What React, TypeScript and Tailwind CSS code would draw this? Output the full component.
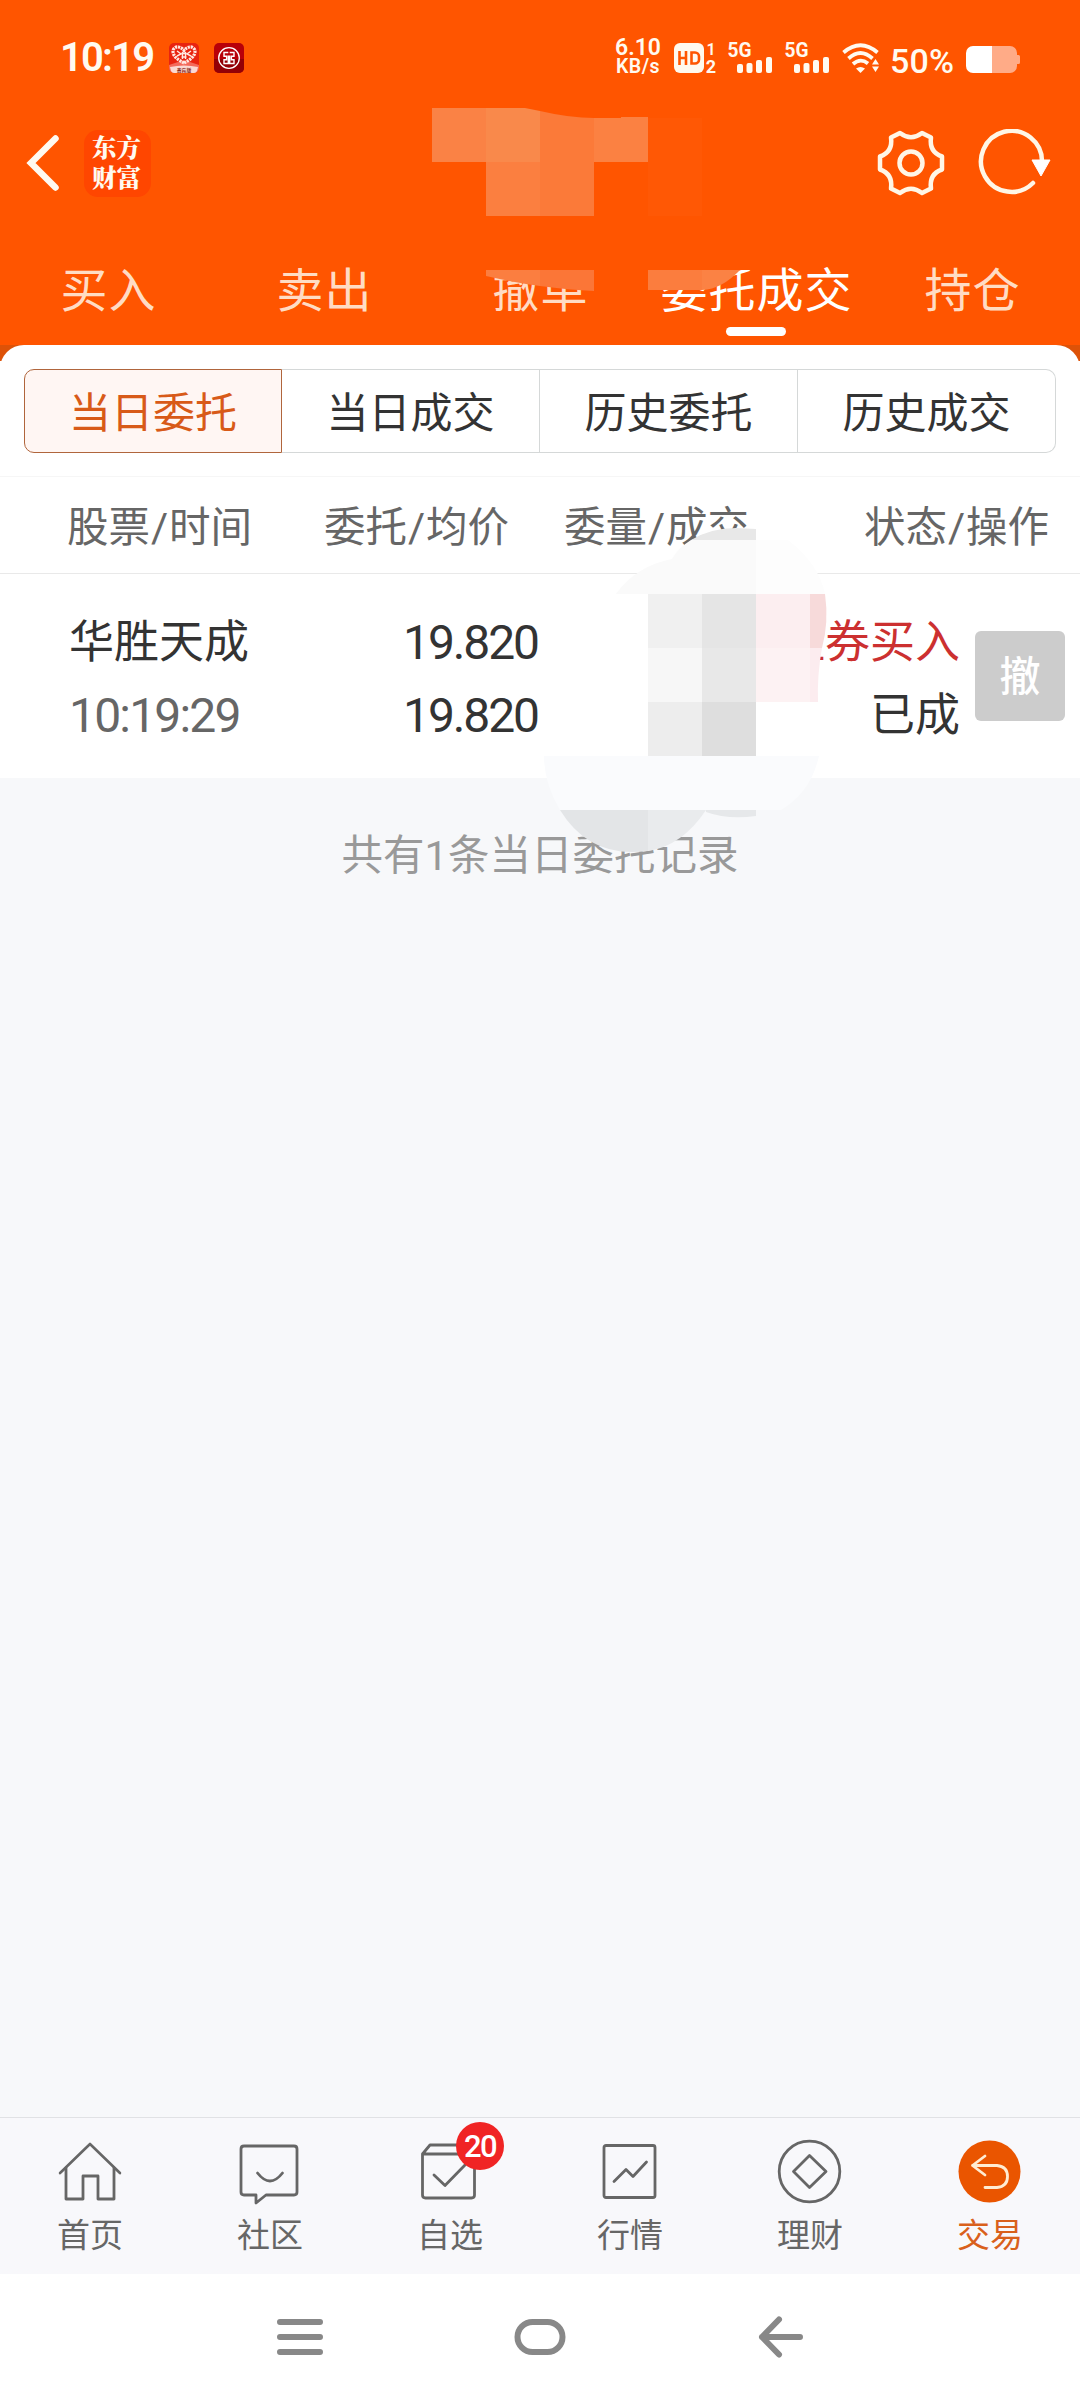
import type { ReactNode } from 'react';

const tabs = ['买入', '卖出', '撤单', '委托成交', '持仓'];

const segments = ['当日委托', '当日成交', '历史委托', '历史成交'];

export default function App() {
  return (
    <div className="relative flex h-[2400px] w-[1080px] flex-col overflow-hidden bg-[#f7f8fa] font-['Roboto','Noto_Sans_CJK_SC',sans-serif] text-[#333]">
      <header className="flex h-[345px] shrink-0 flex-col bg-[#ff5500] text-[#fffaf0]">
        <StatusBar />
        <TitleBar />
        <TopTabs />
      </header>

      <Orders />

      <p className="mt-[54px] flex-1 text-center text-[41.500px] leading-[48px] text-[#999]">共有1条当日委托记录</p>

      <BottomBar />
      <SystemNav />
      <Mosaic />
    </div>
  );
}

function StatusBar() {
  return (
    <div className="flex h-[115px] items-center">
      <span className="ml-[60px] w-[94px] text-[40px] font-semibold leading-none tracking-[-1.8px]">10:19</span>

      {/* Notification icons */}
      <svg className="ml-[15px] h-[30px] w-[30px]" viewBox="0 0 30 30">
        <rect width="30" height="30" rx="5" fill="#e9230f" />
        <path d="M0 22 15 17l15 5v3a5 5 0 0 1-5 5H5a5 5 0 0 1-5-5z" fill="#f4695a" />
        <path
          d="M15 20C9 17 4 13 4 8.500a4.500 4.500 0 0 1 5.500-4.500c2 .2 4 1.500 5.500 3.500 1.500-2 3.500-3.300 5.500-3.500A4.500 4.500 0 0 1 26 8.500C26 13 21 17 15 20z"
          fill="none"
          stroke="#ffe9e2"
          strokeWidth="3.200"
          strokeDasharray="2.200 .8"
        />
        <path d="M8 8l4 3-4 2M22 8l-4 3 4 2M12.500 10.500h5M12.500 14h5M13.500 9v7M16.500 9v7" fill="none" stroke="#ffe9e2" strokeWidth="1.400" />
        <path d="M1 24q14-3 28 0l-1 4a4 4 0 0 1-3 2H5a4 4 0 0 1-3-2z" fill="#fbd9d3" />
        <text x="15" y="28.500" textAnchor="middle" fontSize="4.800" fontWeight="700" fill="#8c2a20">
          贵宾版
        </text>
      </svg>
      <svg className="ml-[15px] h-[30px] w-[30px]" viewBox="0 0 30 30">
        <rect width="30" height="30" rx="5" fill="#b80009" />
        <path d="M0 16h30v9a5 5 0 0 1-5 5H5a5 5 0 0 1-5-5z" fill="#940006" />
        <circle cx="15" cy="15" r="10.300" fill="none" stroke="#fff" strokeWidth="1.300" />
        <path
          d="M14.300 9.500H10v3.700h2.600v3.600H10v3.700h4.300v-8M15.700 9.500H20v3.700h-2.600v3.600H20v3.700h-4.300v-8"
          fill="none"
          stroke="#fff"
          strokeWidth="1.400"
        />
      </svg>

      <div className="ml-[371px] flex w-[46px] flex-col text-center font-semibold">
        <span className="text-[23px] leading-[19px]">6.10</span>
        <span className="text-[19.500px] leading-[20px] tracking-[.4px]">KB/s</span>
      </div>

      <svg className="ml-[13px] h-[30px] w-[43px] overflow-visible" viewBox="0 0 43 30">
        <rect width="30" height="30" rx="6" fill="#fff9ee" />
        <path
          d="M5.500 8v14M12 8v14M5.500 15H12M17.500 9.500h3.500a4 4 0 0 1 4 4v3a4 4 0 0 1-4 4h-3.500z"
          fill="none"
          stroke="#ff5500"
          strokeWidth="2.600"
        />
        <text x="37" y="12" textAnchor="middle" fontSize="16" fontWeight="600" fill="#fff9ee">
          1
        </text>
        <text x="37" y="29.500" textAnchor="middle" fontSize="18" fontWeight="700" fill="#fff9ee">
          2
        </text>
      </svg>

      <Signal className="ml-[11px]" />
      <Signal className="ml-[12px]" />

      <svg className="ml-[12px] h-[30px] w-[38px]" viewBox="0 0 38 30" fill="none" stroke="#fffaf0" strokeWidth="3.800">
        <path d="M1.500 9.500Q18.500-5 35.500 9.500" />
        <path d="M6.500 15.500Q18.500 4.500 30.500 15.500" />
        <path d="M11 21Q18.500 14.500 26 20.500" />
        <path d="M14 25.500q4.500-3 9 0L18.500 30z" fill="#fffaf0" stroke="none" />
        <path d="M30 21.500h7L33.500 16zM30 23.500h7L33.500 29z" fill="#fffaf0" stroke="none" />
      </svg>

      <span className="ml-[10px] mt-[6px] w-[67px] text-[34px] font-medium leading-none tracking-[.2px]">50%</span>

      <svg className="ml-[9px] mt-[4px] h-[27px] w-[55px] shrink-0" viewBox="0 0 55 27">
        <path d="M26 0h18a7 7 0 0 1 7 7v2h1.500a1.500 1.500 0 0 1 1.500 1.500v6a1.500 1.500 0 0 1-1.500 1.500H51v2a7 7 0 0 1-7 7H26z" fill="#ffab87" />
        <path d="M7 0h19v27H7a7 7 0 0 1-7-7V7a7 7 0 0 1 7-7z" fill="#fff" />
      </svg>
    </div>
  );
}

function Signal({ className }: { className: string }) {
  return (
    <svg className={`h-[30px] w-[45px] overflow-visible ${className}`} viewBox="0 0 45 30" fill="#fffaf0">
      <text x="-.5" y="14" fontSize="19.500" fontWeight="700" textLength="24" lengthAdjust="spacingAndGlyphs">
        5G
      </text>
      <rect x="9" y="21" width="6" height="9" rx="2" />
      <rect x="18.500" y="20" width="6" height="10" rx="2" />
      <rect x="28" y="17" width="6" height="13" rx="2" />
      <rect x="38" y="14" width="6" height="16" rx="2" />
    </svg>
  );
}

function TitleBar() {
  return (
    <div className="flex h-[96px] items-center">
      <svg className="ml-[26px] h-[58px] w-[34px]" viewBox="0 0 34 58">
        <path d="M29.500 4.500 5 29 29.500 53.500" fill="none" stroke="#fffaf0" strokeWidth="6.500" strokeLinecap="round" />
      </svg>

      <div className="ml-[24px] flex h-[67px] w-[67px] items-center justify-center rounded-[14px] bg-[#ff4600] pb-[3px] pr-[2px] font-['Noto_Serif_CJK_SC','Noto_Sans_CJK_SC',serif] text-[24.500px] font-black leading-[30px]">
        <span className="w-[49px]">东方财富</span>
      </div>

      <svg className="ml-[724.5px] h-[68px] w-[70px]" viewBox="-35 -34 70 68" fill="none" stroke="#fff6e6" strokeWidth="4.500" strokeLinejoin="round">
        <path d="M-11-30Q0-21.500 11-30L20-25.500Q18-11 31-6.500V6.500Q18 11 20 25.500L11 30Q0 21.500-11 30L-20 25.500Q-18 11-31 6.500V-6.500Q-18-11-20-25.500Z" />
        <circle r="11.500" />
      </svg>

      <svg className="ml-[31px] h-[68px] w-[76px]" viewBox="-34 -34 76 68">
        <path d="M31-1A30.500 30.500 0 1 0 22 20" fill="none" stroke="#fff6e6" strokeWidth="4.500" strokeLinecap="round" />
        <path d="M21-3h18L30 13z" fill="#fff" stroke="#fff" strokeLinejoin="round" />
      </svg>
    </div>
  );
}

function TopTabs() {
  return (
    <nav className="grid h-[134px] grid-cols-5 pt-[53px] text-center text-[47px] leading-[54px] tracking-[1px] text-[#ffdcc4]">
      {tabs.map((tab) => (
        <div key={tab} className={tab === '委托成交' ? 'flex flex-col items-center text-white' : ''}>
          <span className="pl-px">{tab}</span>
          {tab === '委托成交' && <i className="mt-[9px] h-[9px] w-[60px] rounded-full bg-white" />}
        </div>
      ))}
    </nav>
  );
}

function Orders() {
  return (
    <section className="h-[433px] shrink-0 bg-[linear-gradient(#dd5208_16px,#fff_16px)]">
      <div className="h-full rounded-t-[24px] bg-white pt-[24px]">
        {/* Day / history switch */}
        <div className="mx-[24px] grid h-[84px] grid-cols-4 text-[42px]">
          {segments.map((name, i) => (
            <div
              key={name}
              className={`flex items-center justify-center pt-[5px] first:rounded-l-[10px] last:rounded-r-[10px] ${
                i === 0 ? 'border border-[#b0653c] bg-[#fff6f3] text-[#d85a18]' : 'border-y border-r border-[#d5d8d8]'
              }`}
            >
              {name}
            </div>
          ))}
        </div>

        <div className="mt-[23px] flex h-[98px] items-center whitespace-nowrap border-y border-b-[#e9e9e9] border-t-[#f6f6f6] pt-[5px] text-[#666]">
          <ColumnTitle className="ml-[67px]" top="股票" bottom="时间" />
          <ColumnTitle className="ml-[71px]" top="委托" bottom="均价" />
          <ColumnTitle className="ml-[54px]" top="委量" bottom="成交" />
          <ColumnTitle className="ml-[114px]" top="状态" bottom="操作" />
        </div>

        <div className="flex pt-[32px] text-[45px] leading-[73px]">
          <div className="ml-[69px] w-[250px]">
            <p>华胜天成</p>
            <p className="text-[48px] tracking-[-1.8px] text-[#666]">10:19:29</p>
          </div>
          <div className="w-[219px] text-right text-[48px] tracking-[-2.1px]">
            <p>19.820</p>
            <p>19.820</p>
          </div>
          <div className="ml-auto text-right">
            <p className="text-[#cc3030]">证券买入</p>
            <p>已成</p>
          </div>
          <button className="ml-[15px] mr-[15px] mt-[25px] h-[90px] w-[90px] rounded-[6px] bg-[#ccc] text-[41px] font-medium leading-[92px] text-white">
            撤
          </button>
        </div>
      </div>
    </section>
  );
}

function ColumnTitle({ className, top, bottom }: { className: string; top: string; bottom: string }) {
  return (
    <div className={`flex w-[186px] shrink-0 text-[41.500px] leading-[60px] ${className}`}>
      <span>{top}</span>
      <span className="w-[19px] text-center">/</span>
      <span>{bottom}</span>
    </div>
  );
}

function BottomBar() {
  return (
    <nav className="grid h-[157px] shrink-0 grid-cols-6 border-t border-[#e1e2e5] bg-[#f8f8fb] text-[#666]">
      <NavItem label="首页">
        <path d="M3.500 31 35 2l31.500 29" transform="translate(35) scale(.95 1) translate(-35)" />
        <path d="M11 26v31h17V34h15v23h16V26" />
      </NavItem>
      <NavItem label="社区">
        <path d="M8 4h50q3 0 3 3v43q0 3-3 3H30l-10 8v-8H8q-3 0-3-3V7q0-3 3-3z" transform="translate(1)" />
        <path d="M22.500 31q12.500 16 25 0" />
      </NavItem>
      <NavItem label="自选" badge={20}>
        <path d="M7.500 12h52v41q0 3-3 3h-46q-3 0-3-3zL15 3h37l7.500 9" />
        <path d="M19 33l11 10.500L50 23" />
      </NavItem>
      <NavItem label="行情">
        <rect x="9" y="3.500" width="51" height="52" rx="2" />
        <path d="M19 39.500l12-12 7 7L51.500 20" />
      </NavItem>
      <NavItem label="理财">
        <circle cx="34.500" cy="29.500" r="30.300" />
        <path d="M34.500 13.500 51 29.500 34.500 45.500 18.500 29.500z" />
      </NavItem>
      <NavItem label="交易" active>
        <circle cx="34.500" cy="29.500" r="31" fill="#ea5500" stroke="none" />
        <path d="M30 14 17.500 23.500 30 33M17.500 23.500H42q10.500 1 10.500 11T42 45.500H30" stroke="#ffecd2" />
      </NavItem>
    </nav>
  );
}

interface NavItemProps {
  label: string;
  children: ReactNode;
  badge?: number;
  active?: boolean;
}

function NavItem({ label, children, badge, active }: NavItemProps) {
  return (
    <div className={`relative flex flex-col items-center pt-[24px] ${active ? 'text-[#d9601c]' : ''}`}>
      <svg
        className="h-[62px] w-[70px] overflow-visible"
        viewBox="0 0 70 62"
        fill="none"
        stroke="currentColor"
        strokeWidth="2.800"
        strokeLinecap="round"
        strokeLinejoin="round"
      >
        {children}
      </svg>
      <span className="mt-[13px] text-[33px] leading-[38px]">{label}</span>
      {badge && (
        <span className="absolute left-[96px] top-[4px] h-12 w-12 rounded-full bg-[#f02424] text-center text-[31px] font-medium leading-[49px] tracking-[-1.5px] text-white">
          {badge}
        </span>
      )}
    </div>
  );
}

function SystemNav() {
  return (
    <div className="flex h-[126px] shrink-0 items-center justify-center gap-[189px] bg-white">
      <svg className="h-[42px] w-[48px]" viewBox="0 0 48 42" stroke="#888" strokeWidth="6" strokeLinecap="round">
        <path d="M4 6h40M4 21h40M4 36h40" />
      </svg>
      <svg className="h-[42px] w-[54px]" viewBox="0 0 54 42" fill="none" stroke="#888" strokeWidth="6">
        <rect x="4.500" y="6" width="45" height="30" rx="15" />
      </svg>
      <svg className="h-[42px] w-[48px]" viewBox="0 0 48 42" fill="none" stroke="#888" strokeWidth="6" strokeLinecap="round" strokeLinejoin="round">
        <path d="M23 3.500 6 21l17 17.500M6 21h38" />
      </svg>
    </div>
  );
}

// Pixelated patches that hide the account name and the order amounts
function Mosaic() {
  return (
    <svg className="pointer-events-none absolute left-0 top-0 h-[900px] w-[1080px]" viewBox="0 0 1080 900">
      <g shapeRendering="crispEdges">
        <path d="M486 216h270v54H486z" fill="#ff5500" />
        <path d="M432 108h54v54h-54z" fill="#fa8245" />
        <path d="M594 118l54-1v45h-54z" fill="#fb8142" />
        <path d="M486 162h54v54h-54z" fill="#fb7f40" />
        <path d="M648 118h54v98h-54z" fill="#ff5805" />
        <path d="M648 594h54v54h-54z" fill="#f0f0f0" />
        <path d="M702 594h54v54h-54z" fill="#e5e5e5" />
        <path d="M756 594h54v54h-54z" fill="#fceef0" />
        <path d="M648 648h54v54h-54z" fill="#f7f7f7" />
        <path d="M702 648h54v54h-54z" fill="#e8e8e8" />
        <path d="M756 648h54v54h-54z" fill="#fdf2f3" />
        <path d="M648 702h54v54h-54z" fill="#ededed" />
        <path d="M702 702h54v54h-54z" fill="#dedede" />
      </g>
      <path d="M486 108h39l15 3v51h-54z" fill="#f9894b" />
      <path d="M540 111q30 7 54 7v98h-54z" fill="#fb7a39" />
      <path d="M486 270h54v16q-28-4-54-10z" fill="#fb7e40" />
      <path d="M540 270h54v21q-25-1-54-5z" fill="#fb7637" />
      <path d="M648 270h54v20h-54z" fill="#fb7d3e" />
      <path d="M702 270h38q-18 19-38 20z" fill="#fb8244" />

      <path d="M691 540q20-12 45-12l20 1v11z" fill="#e8e8e8" />
      <path d="M616 594q20-28 56-35 6-11 19-19h65v54z" fill="#fafafa" />
      <path d="M756 540h32q31 24 37 54h-69z" fill="#fdfdfd" />
      <path d="M810 594h15q4 28-3 54h-12z" fill="#f7dada" />
      <path d="M810 648h12q-5 27-4 54h-8z" fill="#fcecef" />
      <path d="M544 756h275q-8 36-38 54H560q-16-27-16-54z" fill="#fafbfd" />
      <path d="M560 810h88v41q-58 8-88-41z" fill="#e3e5e7" />
      <path d="M648 810h58q-24 36-58 41z" fill="#e9ebed" />
      <path d="M706 810h50v6q-28 4-50-4z" fill="#e6e8ea" />
    </svg>
  );
}
